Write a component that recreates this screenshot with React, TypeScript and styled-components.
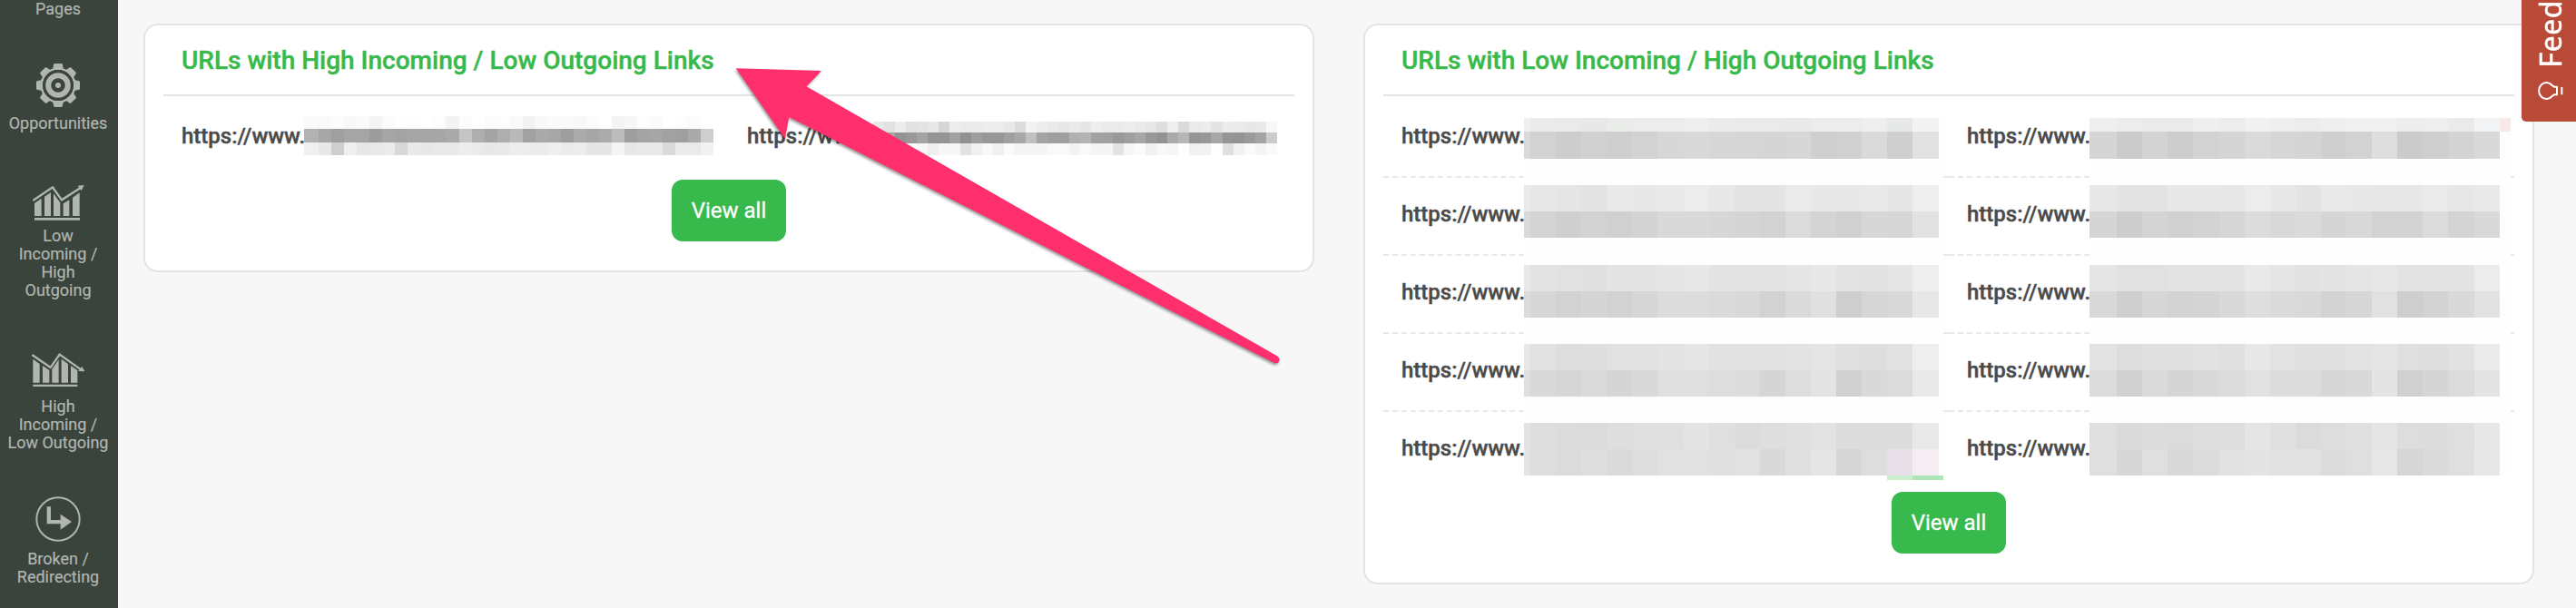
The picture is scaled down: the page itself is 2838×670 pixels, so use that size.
import { createGlobalStyle, styled } from 'styled-components';

interface IRedactionData {
  left: number;
  top: number;
  columns: string;
  rows: string;
  cells: string[];
}

interface ILinkCardProps {
  title: string;
  links: string[];
  redactions: IRedactionData[];
}

const BLANK = Array(18).fill('fe').join(' ');

// 모자이크 색상값: 두 자리는 회색, 여섯 자리는 일반 색상
const incomingRedactions: IRedactionData[] = [
  {
    left: 155,
    top: 22,
    columns: '16px repeat(31, 14.06px)',
    rows: '14px 15px 14px',
    cells: [
      'fa f9 fc f8 fa f4 fb fe fd ff fd f3 fb ff fc fd f9 f2 f8 fa fa f8 fb ff f4 f7 fe fa ff fd fb ff',
      'b2 a7 9f a5 a5 9c a6 a3 a6 a6 a6 aa c5 ae a4 ae b9 a1 aa a7 9e ab a6 ab bc 9e a4 a6 a1 9f aa ce',
      'f0 e8 ce ef e6 e9 ea d8 ea e7 e9 e9 ed ea e8 e9 ed ec eb ef eb ec e6 e6 f4 e7 e9 e9 da ea ea f1',
    ],
  },
  {
    left: 782,
    top: 28,
    columns: 'repeat(37, 12.03px)',
    rows: '12px 12px 12.5px',
    cells: [
      'e8 e1 ec e1 e3 e8 d6 ec ea eb ed ec e9 dc f2 ed ea e7 ea e6 ee ea eb ed ea e7 de ee da ea ec e4 ec ea e7 e9 f7',
      'a8 a6 93 99 a4 95 95 a1 91 9e 97 97 a0 a8 c0 a4 9f 9f b0 b3 a2 a1 99 9e a6 98 92 aa b6 95 98 a6 95 93 9a a4 cc',
      'ff ff ff ff f7 ef f7 f7 e2 f0 f8 f0 fa f4 f5 f5 f9 f9 f3 f9 f4 f5 e3 f6 fb f1 f8 f6 fe f1 f2 fe e0 f2 fa f4 f9',
    ],
  },
];

const outgoingRedactions: IRedactionData[] = [
  {
    left: 155,
    top: 24,
    columns: '7px repeat(16, 28.1px) 5.4px',
    rows: '15px 30px 29px 29px 29px 29.5px 29px 29px 29px 29px 29px 29px 29px 29.5px 5px',
    cells: [
      'ef eb ea e8 eaecea ec ec ef eb ea ea e9 ec ec ee e6e9e7 f3 fe',
      'da d2 cd d1 cf d2 d7 d9 d7 d6 d5 d7 cf d0 da cf e1 fe',
      BLANK,
      'ea e7 e5 e3 e9 e8 e9 ec e8 e4 e4 ea e8 e8 e9 e6 ef fe',
      'da d4 cf d2 d0 d3 d9 d9 d7 d5 d2 db d4 d0 d7 d6 e2 fe',
      BLANK,
      'e8 e3 e1 e0 e4 e4 e5 e8 e4 e3 e3 e5 e8 e3 e2 e5 ee fe',
      'db d6 d2 d5 d2 d6 dc dc da d8 d2 da e0 ce d6 d8 e7 fe',
      BLANK,
      'e7 e1 dd de e1 e1 e3 e6 e2 e1 e1 e3 e5 df de e2 ee fe',
      'df d9 d6 da d5 d9 df df dd dc d5 dd e3 d1 d9 db e9 fe',
      BLANK,
      'e3 de dc db de df e0 e4 df dc de e0 e3 dc dc dc e9 fe',
      'e4 dd db de da dd e1 e1 e0 e1 d9 e0 e5 d6 dd e8e0e8 f4edf1 fe',
      'ff ff ff ff ff ff ff ff ff ff ff ff ff ff ff c8edcf aee5b6 aee5b6',
    ],
  },
  {
    left: 778,
    top: 24,
    columns: '30.2px repeat(15, 28.1px) 12.3px',
    rows: '15px 30px 29px 29px 29px 29.5px 29px 29px 29px 29px 29px 29px 29px 29.5px',
    cells: [
      'ee ec ea ea ef ec f1 ee ec ef f0 f0 ed ee ea f2f4f6 f6e9e7',
      'd5 cb d3 cd d2 d5 da d6 d4 cf d2 de cb ce d3 d9 fe',
      BLANK.slice(3),
      'e8 e4 e3 e8 e8 e7 ec e8 e4 e9 e8 e7 e7 ea e7 e9 fe',
      'd5 cd d4 d0 d2 d6 dc d8 da d5 d8 d2 d2 db d4 d9 fe',
      BLANK.slice(3),
      'e5 e1 e1 e3 e4 e3 e9 e5 e2 e4 e5 e7 e3 e3 e4 ec fe',
      'd8 cf d6 d2 d4 d9 de da d9 d3 d6 e1 ce d2 d9 e2 fe',
      BLANK.slice(3),
      'e3 dd df df e2 df e8 e3 e0 e0 e3 e5 df de e2 ea fe',
      'db d1 da d5 d8 db e1 dc dc d7 d9 e4 d0 d5 db e4 fe',
      BLANK.slice(3),
      'df da dc db de de e5 e0 db dd df e5 dd dc df e8 fe',
      'df d7 df d9 dc e1 e4 e1 e1 dc df e7 d6 da df e7 fe',
    ],
  },
];

function GearIcon() {
  const teeth = [0, 45, 90, 135, 180, 225, 270, 315];

  return (
    <svg width="48" height="48" viewBox="-24 -24 48 48" fill="#b0b5b0">
      {teeth.map((angle) => (
        <path
          key={angle}
          d="M-6 -17 L-5 -22.6 Q-4.7 -24 -3.4 -24 H3.4 Q4.7 -24 5 -22.6 L6 -17 Z"
          transform={`rotate(${angle})`}
        />
      ))}
      <circle r="18.2" fill="none" stroke="#b0b5b0" strokeWidth="2.6" />
      <circle r="17" fill="#3b443c" />
      <circle r="10.8" fill="none" stroke="#b0b5b0" strokeWidth="6" />
      <circle r="3" />
    </svg>
  );
}

function ChartUpIcon() {
  return (
    <svg width="57" height="39" viewBox="108 612 171 117" fill="#b0b5b0">
      <path
        d="M109 663 L174 619 L204 661 L266 621"
        fill="none"
        stroke="#b0b5b0"
        strokeWidth="7"
      />
      <path d="M278 612 L257 614 L269 630 Z" />
      <path d="M114 672 L137 656 V714 H114 Z M147 650 L168 636 V714 H147 Z M177 640 L199 670 V714 H177 Z M209 673 L229 661 V714 H209 Z M240 653 L263 637 V714 H240 Z" />
      <path d="M114 720 H264 V728 H114 Z" />
    </svg>
  );
}

function ChartDownIcon() {
  return (
    <svg width="59" height="38" viewBox="107 148 177 114" fill="#b0b5b0">
      <path
        d="M108 154 L169 196 L199 153 L270 203"
        fill="none"
        stroke="#b0b5b0"
        strokeWidth="7"
      />
      <path d="M282 209 L261 208 L273 193 Z" />
      <path d="M111 168 L133 184 V246 H111 Z M143 190 L165 205 V246 H143 Z M174 201 L196 170 V246 H174 Z M205 168 L227 184 V246 H205 Z M236 190 L258 205 V246 H236 Z" />
      <path d="M111 252 H258 V259 H111 Z" />
    </svg>
  );
}

function RedirectIcon() {
  return (
    <svg width="50" height="50" viewBox="117 621 150 150" fill="#b0b5b0">
      <circle
        cx="192"
        cy="696"
        r="71"
        fill="none"
        stroke="#b0b5b0"
        strokeWidth="6"
      />
      <path d="M155 655 H168 V699 H200 V680 L237 705 L200 731 V712 H155 Z" />
    </svg>
  );
}

function BulbIcon() {
  return (
    <svg
      width="28"
      height="20"
      viewBox="174 269 84 60"
      fill="none"
      stroke="#fff"
      strokeWidth="6"
    >
      <path d="M221 281 A25 27 0 1 0 221 317 L228 312 H237 V286 H228 Z" />
      <path d="M253 287 V312" />
    </svg>
  );
}

function Redaction({ left, top, columns, rows, cells }: IRedactionData) {
  // 두 자리 값은 r, g, b에 똑같이 사용
  const toColor = (value: string) =>
    value.length === 2 ? `#${value.repeat(3)}` : `#${value}`;

  return (
    <RedactionGrid $left={left} $top={top} $columns={columns} $rows={rows}>
      {cells.flatMap((row, y) =>
        row
          .split(' ')
          .map((value, x) => (
            <span
              key={`${y}-${x}`}
              style={{ backgroundColor: toColor(value) }}
            />
          ))
      )}
    </RedactionGrid>
  );
}

function LinkCard({ title, links, redactions }: ILinkCardProps) {
  return (
    <Card>
      <CardTitle>{title}</CardTitle>
      <LinkList>
        {links.map((link, index) => (
          <LinkItem key={index} $isLast={index >= links.length - 2}>
            {link}
          </LinkItem>
        ))}
        {redactions.map((redaction) => (
          <Redaction key={redaction.left} {...redaction} />
        ))}
      </LinkList>
      <ViewAllButton>View all</ViewAllButton>
    </Card>
  );
}

function App() {
  return (
    <Page>
      <GlobalStyle />
      <Sidebar>
        <MenuItem $gap={0} $space={50}>
          <MenuLabel>Pages</MenuLabel>
        </MenuItem>
        <MenuItem $gap={8} $space={58}>
          <GearIcon />
          <MenuLabel>Opportunities</MenuLabel>
        </MenuItem>
        <MenuItem $gap={7} $space={59}>
          <ChartUpIcon />
          <MenuLabel>
            Low
            <br />
            Incoming /
            <br />
            High
            <br />
            Outgoing
          </MenuLabel>
        </MenuItem>
        <MenuItem $gap={11} $space={49}>
          <ChartDownIcon />
          <MenuLabel>
            High
            <br />
            Incoming /
            <br />
            Low Outgoing
          </MenuLabel>
        </MenuItem>
        <MenuItem $gap={9} $space={0}>
          <RedirectIcon />
          <MenuLabel>
            Broken /
            <br />
            Redirecting
          </MenuLabel>
        </MenuItem>
      </Sidebar>
      <Content>
        <LinkCard
          title="URLs with High Incoming / Low Outgoing Links"
          links={Array(2).fill('https://www.')}
          redactions={incomingRedactions}
        />
        <LinkCard
          title="URLs with Low Incoming / High Outgoing Links"
          links={Array(10).fill('https://www.')}
          redactions={outgoingRedactions}
        />
      </Content>
      <Pointer width="620" height="350" viewBox="800 65 620 350">
        <path
          d="M810.8 75.2 L905 78 L888.5 95.2 L1407 392.3 Q1411 395 1409 398.5 Q1407 401.5 1403 399.6 L869.3 129 L864.8 153 Z"
          fill="#ff2f6d"
        />
      </Pointer>
      <FeedbackTab>
        <FeedbackLabel>Feed</FeedbackLabel>
        <BulbIcon />
      </FeedbackTab>
    </Page>
  );
}

const GlobalStyle = createGlobalStyle`
  * {
    box-sizing: border-box;
  }

  body {
    margin: 0;
    overflow: hidden;
    background-color: #f7f7f7;
    font-family: Roboto, sans-serif;
  }
`;

const Page = styled.div`
  height: 670px;
  display: flex;
  overflow: hidden;
  position: relative;
`;

const Sidebar = styled.nav`
  width: 130px;
  display: flex;
  flex-shrink: 0;
  align-items: center;
  flex-direction: column;
  background-color: #3b443c;
`;

const MenuItem = styled.div<{ $gap: number; $space: number }>`
  width: 128px;
  display: flex;
  flex-shrink: 0;
  margin-right: 2px;
  align-items: center;
  flex-direction: column;
  gap: ${({ $gap }) => $gap}px;
  margin-bottom: ${({ $space }) => $space}px;
`;

const MenuLabel = styled.span`
  color: #b0b5b0;
  font-size: 18px;
  line-height: 20px;
  text-align: center;
  -webkit-text-stroke: 0.2px;
`;

const Content = styled.main`
  gap: 54px;
  display: flex;
  align-items: flex-start;
  padding: 26px 46px 0 28px;
`;

const Card = styled.section`
  width: 1290px;
  display: flex;
  padding: 0 20px 32px;
  border-radius: 16px;
  align-items: center;
  flex-direction: column;
  background-color: #fff;
  border: 2px solid #e4e4e4;
`;

const CardTitle = styled.h2`
  margin: 0;
  width: 100%;
  height: 78px;
  color: #38b94b;
  font-size: 28px;
  font-weight: 500;
  padding: 0 20px;
  line-height: 78px;
  border-bottom: 2px solid #e4e4e4;
  -webkit-text-stroke: 0.4px;
`;

const LinkList = styled.div`
  width: 100%;
  display: grid;
  padding: 4px 0 2px;
  position: relative;
  grid-template-columns: 1fr 1fr;
`;

const LinkItem = styled.a<{ $isLast: boolean }>`
  height: 86px;
  padding: 0 20px;
  color: #4a4a4a;
  font-size: 24px;
  font-weight: 500;
  line-height: 80px;
  -webkit-text-stroke: 0.4px;
  border-bottom: 2px dashed ${({ $isLast }) =>
    $isLast ? 'transparent' : '#e9e9e9'};
`;

const RedactionGrid = styled.div<{
  $left: number;
  $top: number;
  $columns: string;
  $rows: string;
}>`
  display: grid;
  position: absolute;
  top: ${({ $top }) => $top}px;
  left: ${({ $left }) => $left}px;
  grid-template-rows: ${({ $rows }) => $rows};
  grid-template-columns: ${({ $columns }) => $columns};
`;

const ViewAllButton = styled.button`
  border: 0;
  width: 126px;
  height: 68px;
  color: #fff;
  padding: 0;
  font-size: 24px;
  font-weight: 400;
  border-radius: 12px;
  font-family: inherit;
  background-color: #38b94b;
  -webkit-text-stroke: 0.3px;
`;

const Pointer = styled.svg`
  top: 65px;
  left: 800px;
  position: absolute;
  filter: drop-shadow(-1px 2px 1.5px rgba(0, 0, 0, 0.4));
`;

const FeedbackTab = styled.div`
  top: 0;
  right: 0;
  gap: 16px;
  width: 60px;
  height: 134px;
  display: flex;
  position: absolute;
  align-items: center;
  flex-direction: column;
  padding: 0 0 24px 3px;
  justify-content: flex-end;
  background-color: #b94a38;
  border-bottom-left-radius: 5px;

  svg {
    flex-shrink: 0;
  }
`;

const FeedbackLabel = styled.span`
  color: #fff;
  flex-shrink: 0;
  font-size: 32px;
  font-weight: 500;
  line-height: 44px;
  letter-spacing: 0.6px;
  font-family: 'Open Sans', sans-serif;
  writing-mode: vertical-rl;
  transform: rotate(180deg);
  -webkit-text-stroke: 0.6px;
`;

export default App;
